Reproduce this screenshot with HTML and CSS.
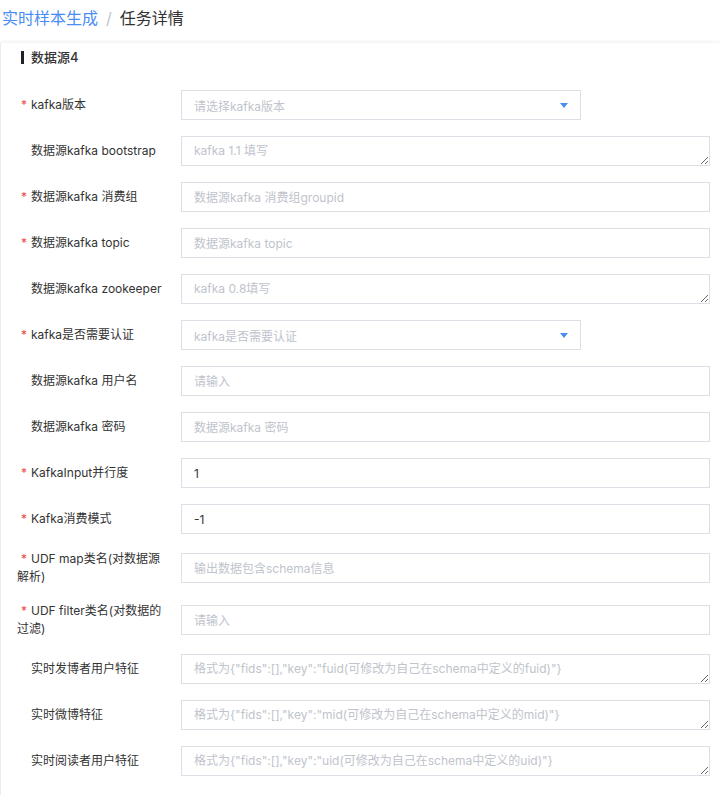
FILE: index.html
```html
<!DOCTYPE html>
<html lang="zh-CN">
<head>
<meta charset="utf-8" />
<title>任务详情</title>
<link rel="stylesheet" href="styles.css">
</head>
<body>
<div class="crumb">
  <a class="crumb-link" href="#">实时样本生成</a><span class="crumb-sep">/</span><span class="crumb-cur">任务详情</span>
</div>

<div class="card">
  <div class="sec-title">数据源4</div>

  <form class="form">
    <div class="item">
      <label class="label req">kafka版本</label>
      <div class="ctl"><div class="select"><span class="ph">请选择kafka版本</span><i class="caret"></i></div></div>
    </div>
    <div class="item">
      <label class="label">数据源kafka bootstrap</label>
      <div class="ctl"><textarea class="area" placeholder="kafka 1.1 填写"></textarea></div>
    </div>
    <div class="item">
      <label class="label req">数据源kafka 消费组</label>
      <div class="ctl"><input class="inp" placeholder="数据源kafka 消费组groupid" /></div>
    </div>
    <div class="item">
      <label class="label req">数据源kafka topic</label>
      <div class="ctl"><input class="inp" placeholder="数据源kafka topic" /></div>
    </div>
    <div class="item">
      <label class="label">数据源kafka zookeeper</label>
      <div class="ctl"><textarea class="area" placeholder="kafka 0.8填写"></textarea></div>
    </div>
    <div class="item">
      <label class="label req">kafka是否需要认证</label>
      <div class="ctl"><div class="select"><span class="ph">kafka是否需要认证</span><i class="caret"></i></div></div>
    </div>
    <div class="item">
      <label class="label">数据源kafka 用户名</label>
      <div class="ctl"><input class="inp" placeholder="请输入" /></div>
    </div>
    <div class="item">
      <label class="label">数据源kafka 密码</label>
      <div class="ctl"><input class="inp" placeholder="数据源kafka 密码" /></div>
    </div>
    <div class="item">
      <label class="label req">KafkaInput并行度</label>
      <div class="ctl"><input class="inp" value="1" /></div>
    </div>
    <div class="item">
      <label class="label req">Kafka消费模式</label>
      <div class="ctl"><input class="inp" value="-1" /></div>
    </div>
    <div class="item">
      <label class="label req">UDF map类名(对数据源解析)</label>
      <div class="ctl"><input class="inp" placeholder="输出数据包含schema信息" /></div>
    </div>
    <div class="item">
      <label class="label req">UDF filter类名(对数据的过滤)</label>
      <div class="ctl"><input class="inp" placeholder="请输入" /></div>
    </div>
    <div class="item">
      <label class="label">实时发博者用户特征</label>
      <div class="ctl"><textarea class="area" placeholder='格式为{"fids":[],"key":"fuid(可修改为自己在schema中定义的fuid)"}'></textarea></div>
    </div>
    <div class="item">
      <label class="label">实时微博特征</label>
      <div class="ctl"><textarea class="area" placeholder='格式为{"fids":[],"key":"mid(可修改为自己在schema中定义的mid)"}'></textarea></div>
    </div>
    <div class="item">
      <label class="label">实时阅读者用户特征</label>
      <div class="ctl"><textarea class="area" placeholder='格式为{"fids":[],"key":"uid(可修改为自己在schema中定义的uid)"}'></textarea></div>
    </div>
  </form>
</div>
</body>
</html>
```

FILE: styles.css
```css
body { margin: 0; background: #fff; font-family: Inter, "Noto Sans CJK SC", sans-serif; color: #333; }

.crumb { height: 37px; line-height: 36px; padding-left: 2px; font-size: 16px; margin-bottom: 6px; }
.crumb-link { color: #4a8cf6; text-decoration: none; }
.crumb-sep { color: #c0c4cc; margin: 0 8px 0 8px; }
.crumb-cur { color: #333; }

.card { border-left: 1px solid #ececec; box-shadow: 0 -1px 4px rgba(0,0,0,.07); padding: 7px 10px 20px 16px; min-height: 760px; }
.sec-title { display: flex; align-items: center; margin-left: 4px; font-size: 13px; line-height: 14px; font-weight: 500; margin-bottom: 26px; }
.sec-title::before { content: ""; width: 3px; height: 13px; background: #222; margin-right: 7px; }

.item { display: flex; align-items: center; margin-bottom: 16px; }
.label { width: 152px; margin-right: 12px; font-size: 12px; line-height: 18px; color: #333; }
.label::before { content: "*"; display: inline-block; width: 14px; text-align: center; color: transparent; }
.label.req::before { color: #f04848; }
.ctl { flex: 1; min-width: 0; }

.inp, .area, .select { display: block; width: 100%; height: 30px; box-sizing: border-box; border: 1px solid #dcdfe6; border-radius: 0; background: #fff; font-family: inherit; font-size: 12px; color: #333; padding: 0 12px; outline: none; margin: 0; }
.area { padding: 6px 12px; line-height: 16px; resize: vertical; }
.inp::placeholder, .area::placeholder { color: #c0c4cc; }

.select { width: 400px; display: flex; align-items: center; justify-content: space-between; }
.select .ph { color: #c0c4cc; }
.caret { width: 0; height: 0; border-left: 4px solid transparent; border-right: 4px solid transparent; border-top: 5px solid #4a8cf6; }
```
